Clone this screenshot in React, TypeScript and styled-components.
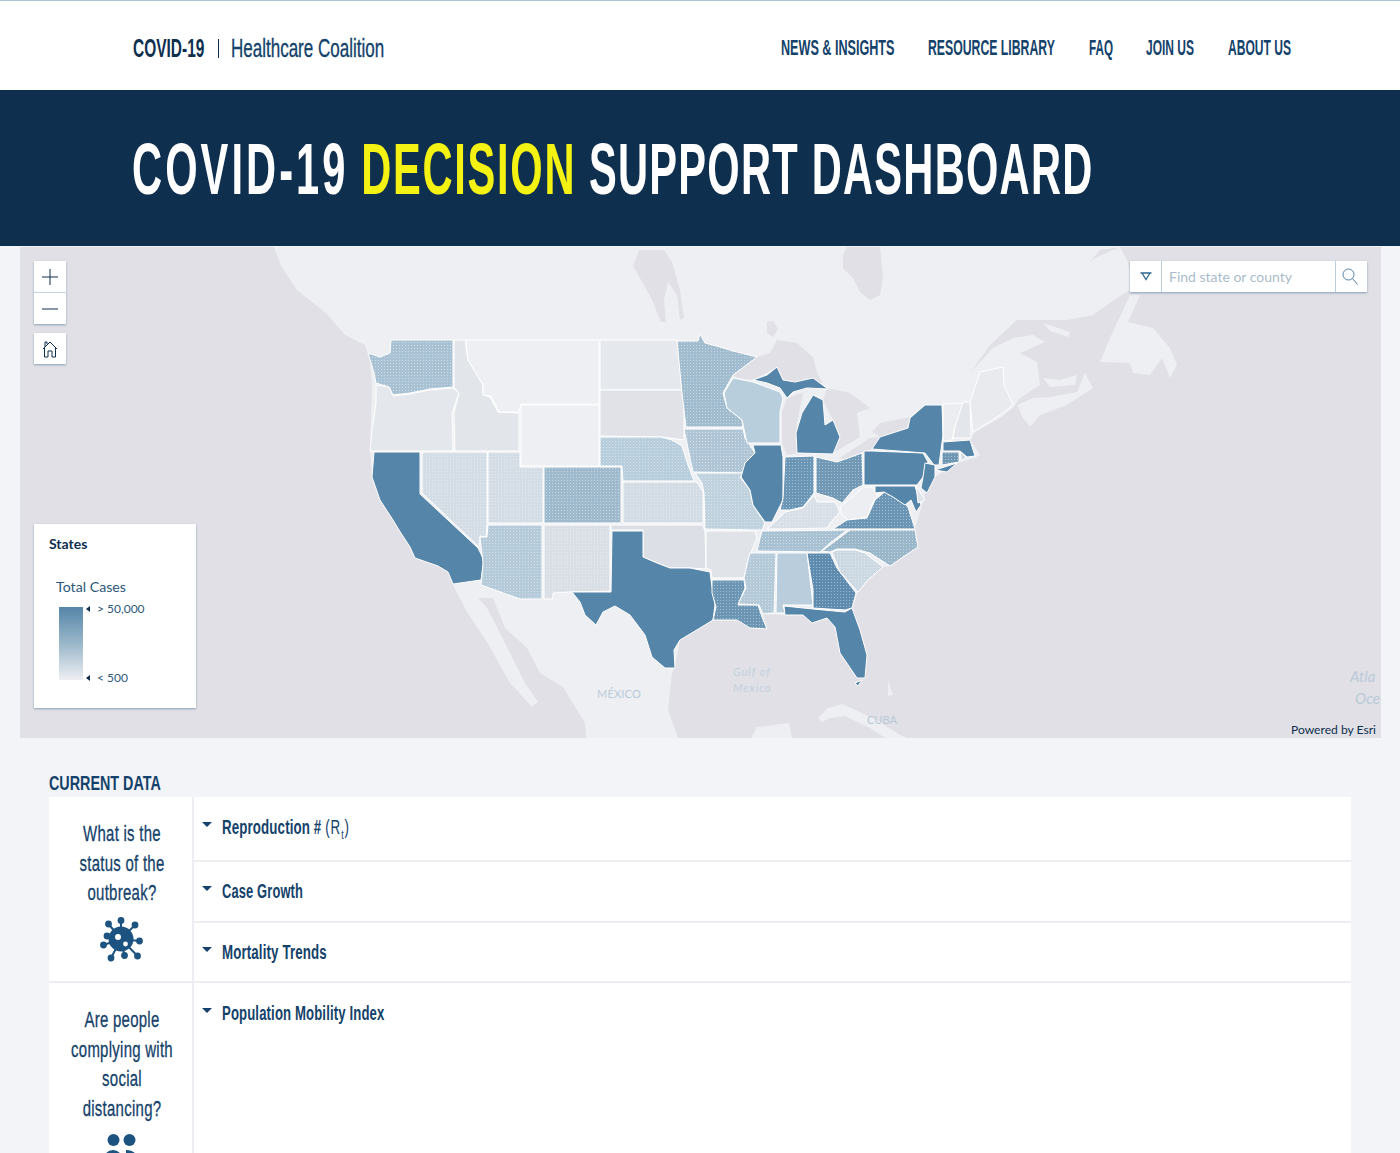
import React from "react";
import styled, { createGlobalStyle } from "styled-components";

const NAVY = "#0f2f4f";
const INK = "#14426a";
const GOTHIC = `"Liberation Sans", Arial, sans-serif`;
const BODY = `Lato, "Open Sans", sans-serif`;

const GlobalStyle = createGlobalStyle`
  html, body {
    margin: 0;
    height: 1153px;
    overflow: hidden;
    background: #f3f4f7;
    font-family: ${BODY};
  }
`;

const Header = styled.header`
  height: 90px;
  box-sizing: border-box;
  border-top: 1px solid #a9c4d8;
  background: #fff;
  display: flex;
  align-items: center;
  justify-content: space-between;
  padding: 5px 109px 0 133px;
`;

const Squeeze = styled.span<{ $sx: number }>`
  display: inline-block;
  white-space: nowrap;
  transform: scaleX(${({ $sx }) => $sx});
  transform-origin: left center;
`;

const Logo = styled.div`
  display: flex;
  align-items: center;
  font-family: ${GOTHIC};
  font-size: 26px;
  line-height: 30px;
`;

const LogoMark = styled.b`
  display: block;
  width: 85px;
  color: ${NAVY};
`;

const LogoBar = styled.i`
  display: block;
  width: 1px;
  height: 19px;
  margin-right: 12px;
  background: ${NAVY};
`;

const LogoName = styled.span`
  display: block;
  width: 153px;
  color: ${INK};
  -webkit-text-stroke: 0.35px ${INK};
`;

const Nav = styled.nav`
  display: flex;
  gap: 33px;
`;

const NavLink = styled.a<{ $w: number }>`
  display: block;
  width: ${({ $w }) => $w}px;
  font-family: ${GOTHIC};
  font-size: 22px;
  font-weight: 700;
  color: ${INK};
`;

const Banner = styled.div`
  height: 156px;
  background: ${NAVY};
  display: flex;
  align-items: center;
  padding-left: 132px;
  box-sizing: border-box;
  overflow: hidden;
`;

const Title = styled.h1`
  margin: 0;
  font-family: ${GOTHIC};
  font-size: 73px;
  font-weight: 700;
  letter-spacing: 2.2px;
  line-height: 1;
  color: #fff;
  em {
    font-style: normal;
    letter-spacing: 3px;
    color: #f4f213;
  }
`;

const TitleLead = styled.span`
  letter-spacing: 5.4px;
`;

const MapFrame = styled.section`
  position: relative;
  margin: 1px 19px 0 20px;
  height: 491px;
  background: #e0e0e6;
  overflow: hidden;
`;

const MapSvg = styled.svg`
  display: block;
  width: 100%;
  height: 100%;
`;

const ToolStack = styled.div`
  position: absolute;
  left: 14px;
  top: 14px;
  display: flex;
  flex-direction: column;
  gap: 9px;
`;

const ToolGroup = styled.div`
  width: 32px;
  background: #fff;
  box-shadow: 0 1px 2px rgba(70, 110, 145, 0.55);
`;

const ToolButton = styled.div`
  height: 31px;
  display: flex;
  align-items: center;
  justify-content: center;
  & + & {
    border-top: 1px solid #c3d3e0;
  }
`;

const SearchBox = styled.div`
  position: absolute;
  right: 14px;
  top: 14px;
  width: 237px;
  height: 31px;
  display: flex;
  background: #fff;
  box-shadow: 0 1px 2px rgba(70, 110, 145, 0.55);
`;

const SearchCaret = styled.div`
  width: 31px;
  display: flex;
  align-items: center;
  justify-content: center;
`;

const SearchField = styled.div`
  flex: 1;
  border-left: 1px solid #b9cddc;
  border-right: 1px solid #b9cddc;
  padding-left: 7px;
  line-height: 31px;
  font-size: 14px;
  color: #aabccb;
`;

const SearchButton = styled.div`
  width: 31px;
  box-sizing: border-box;
  padding-right: 3px;
  display: flex;
  align-items: center;
  justify-content: center;
`;

const Legend = styled.aside`
  position: absolute;
  left: 14px;
  top: 277px;
  width: 162px;
  height: 184px;
  box-sizing: border-box;
  padding: 12px 15px;
  background: #fff;
  box-shadow: 0 1px 2px rgba(70, 110, 145, 0.55);
  color: ${NAVY};
`;

const LegendTitle = styled.div`
  font-size: 14px;
  font-weight: 700;
  line-height: 16px;
`;

const LegendField = styled.div`
  margin: 26px 0 0 7px;
  font-size: 14.2px;
  line-height: 17px;
  color: #2c5878;
`;

const LegendScale = styled.div`
  display: flex;
  margin: 12px 0 0 10px;
  height: 73px;
`;

const LegendRamp = styled.div`
  width: 24px;
  background: linear-gradient(#5585a8, #9ab7ca 50%, #eeeff3);
`;

const LegendStops = styled.div`
  display: flex;
  flex-direction: column;
  justify-content: space-between;
  margin: -4px 0 -4px 3px;
  font-size: 12px;
  line-height: 12px;
  color: #2c5878;
`;

const LegendStop = styled.div`
  display: flex;
  align-items: center;
  gap: 7px;
  &::before {
    content: "";
    border: 3px solid transparent;
    border-left-width: 0;
    border-right: 4px solid ${NAVY};
  }
`;

const Attribution = styled.div`
  position: absolute;
  right: 5px;
  bottom: 1px;
  font-size: 12.1px;
  line-height: 15px;
  color: ${NAVY};
`;

const DataSection = styled.section`
  margin: 0 49px;
`;

const SectionTitle = styled.h2`
  margin: 0;
  height: 59px;
  box-sizing: border-box;
  padding-top: 32px;
  font-family: ${GOTHIC};
  font-size: 21px;
  line-height: 26px;
  font-weight: 700;
  color: ${INK};
`;

const Group = styled.div`
  display: grid;
  grid-template-columns: 145px 1fr;
  background: #fff;
  border-bottom: 2px solid #eceef3;
`;

const Question = styled.div`
  border-right: 2px solid #eceef3;
  padding: 22px 0 0;
  display: flex;
  flex-direction: column;
  align-items: center;
  overflow: hidden;
`;

const QuestionText = styled.div`
  width: 200px;
  flex: none;
  text-align: center;
  font-family: ${GOTHIC};
  font-size: 22px;
  letter-spacing: 0.4px;
  line-height: 29.6px;
  color: ${INK};
  -webkit-text-stroke: 0.3px ${INK};
  transform: translateX(1px) scaleX(0.68);
`;

const IconSlot = styled.div<{ $top: number }>`
  margin-top: ${({ $top }) => $top}px;
  line-height: 0;
`;

const Rows = styled.div`
  display: flex;
  flex-direction: column;
`;

const Row = styled.div<{ $h: number }>`
  height: ${({ $h }) => $h}px;
  box-sizing: border-box;
  padding: 17px 0 0 8px;
  display: flex;
  align-items: flex-start;
  gap: 10px;
  &:first-child {
    padding-top: 18px;
  }
  & + & {
    border-top: 2px solid #eceef3;
  }
`;

const Caret = styled.span`
  flex: none;
  margin-top: 7px;
  border: 5px solid transparent;
  border-top-color: ${INK};
  border-bottom-width: 0;
`;

const RowTitle = styled.div`
  font-family: ${GOTHIC};
  font-size: 20px;
  line-height: 24px;
  font-weight: 700;
  letter-spacing: 0.2px;
  color: ${INK};
  sub {
    font-size: 13px;
    line-height: 0;
  }
`;

const Paren = styled.span`
  font-weight: 400;
  letter-spacing: 1.4px;
`;

const BLUE = "#5585a8";

const NAV_ITEMS = [
  { label: "NEWS & INSIGHTS", width: 114, sx: 0.573 },
  { label: "RESOURCE LIBRARY", width: 128, sx: 0.557 },
  { label: "FAQ", width: 24, sx: 0.53 },
  { label: "JOIN US", width: 49, sx: 0.545 },
  { label: "ABOUT US", width: 63, sx: 0.548 },
];

const LAND = [
  "274,247 281,266 297,290 326,313 345,335 365,345 370,360 372,385 370,450 372,477 380,500 393,520 399,530 410,547 415,558 438,566 448,572 453,585 467,612 487,642 510,683 532,707 538,702 525,683 517,667 500,633 487,608 478,598 493,598 505,628 527,648 540,673 563,687 585,723 586,738 678,738 668,710 672,673 675,667 680,640 700,628 713,620 737,620 767,629 763,614 785,615 803,615 812,623 827,618 835,627 840,653 857,678 865,678 867,655 860,630 852,608 858,592 868,580 883,567 890,566 903,557 918,547 915,529 922,505 925,493 935,477 957,463 975,458 980,455 970,440 975,432 1000,418 1013,408 1020,398 1040,385 1037,362 1020,353 1045,342 1033,335 1013,338 993,348 970,373 990,345 1017,320 1067,320 1093,315 1117,298 1133,288 1128,262 1120,247",
  "1017,405 1033,398 1050,397 1077,392 1085,373 1093,388 1067,405 1040,415 1030,427 1023,418",
  "1043,378 1060,380 1077,375 1075,385 1050,387",
  "1043,323 1070,332 1068,337 1050,331",
  "1100,362 1110,338 1130,295 1140,295 1128,322 1153,328 1170,348 1177,365 1170,378 1162,358 1150,375 1133,373 1130,363",
  "818,718 828,708 842,704 860,712 880,722 900,735 908,738 885,738 870,728 845,716 830,718 822,722",
  "751,738 757,727 789,723 792,738",
  "888,680 893,695 888,696",
];

const LAKES = [
  "843,255 847,247 880,247 883,278 880,295 870,300 860,292 853,278 843,268",
  "633,266 639,250 664,250 672,262 680,290 684,318 680,320 677,295 668,282 664,300 666,322 661,322 652,300 644,285",
  "733,375 757,357 770,353 777,340 797,343 813,357 817,373 823,383 807,380 795,382 783,380 777,367 753,380 737,378",
  "782,412 787,398 810,390 803,393 797,423 798,453 787,455 782,443",
  "827,388 850,393 870,408 857,413 860,437 843,447 833,453 840,437 833,420 823,400",
  "840,458 870,438 882,437 870,450 862,453 843,460",
  "872,432 880,423 910,417 908,428 880,437",
  "767,322 773,321 778,329 773,337 767,333",
  "1090,262 1100,250 1120,247 1095,258",
];

// dotted marks the states that are stippled in the source map
const STATES: { fill: string; points: string; dotted?: boolean }[] = [
  { fill: "#a9c2d3", dotted: true, points: "391,340 453,340 453,387 430,389 410,393 393,395 389,387 376,383 374,373 368,353 380,357 390,353" },
  { fill: "#e4e7ec", points: "376,385 389,387 393,396 410,394 430,390 453,388 459,393 452,413 453,451 370,451 372,430 376,403" },
  { fill: "#e2e5ea", points: "454,340 465,340 468,360 483,385 483,395 490,397 498,412 519,413 519,451 455,451 454,413 459,393 454,387" },
  { fill: "#edeff3", points: "466,340 599,340 599,404 521,404 519,412 499,412 491,396 483,395 483,385 468,360" },
  { fill: "#e5e8ec", points: "600,340 677,340 682,390 600,390" },
  { fill: "#e0e2e8", points: "600,390 682,390 684,405 684,440 662,437 600,436" },
  { fill: "#b9cedc", dotted: true, points: "600,437 661,437 672,440 682,446 688,465 694,481 623,481 622,466 600,466" },
  { fill: "#eeeff3", points: "521,405 599,405 599,466 521,466" },
  { fill: "#9fbacc", dotted: true, points: "544,467 621,467 621,523 544,523" },
  { fill: "#d4dce5", dotted: true, points: "488,452 520,452 520,467 543,467 543,523 488,523" },
  { fill: "#d4dce5", dotted: true, points: "422,452 487,452 487,523 486,537 480,536 479,547 422,493" },
  { fill: BLUE, points: "374,452 420,452 420,494 478,548 484,560 481,580 453,584 448,572 438,566 415,558 410,547 399,530 393,520 380,500 372,477" },
  { fill: "#b5cbda", dotted: true, points: "488,525 542,525 542,599 520,599 481,585 483,563 480,537 487,537" },
  { fill: "#dadfe6", dotted: true, points: "544,525 610,525 610,591 570,592 553,593 553,599 544,599" },
  { fill: "#d3dbe4", dotted: true, points: "623,482 697,482 703,492 703,523 623,523" },
  { fill: "#dddfe6", points: "611,525 703,525 705,532 706,569 690,568 670,568 655,562 643,557 643,530 611,530" },
  { fill: BLUE, points: "612,531 643,531 643,557 657,563 670,568 690,568 710,572 711,580 715,605 713,620 700,628 680,640 674,650 675,668 665,668 652,657 645,635 630,615 615,606 603,612 596,625 585,615 580,602 572,592 611,592" },
  { fill: "#a2bccf", dotted: true, points: "677,341 698,341 700,334 705,343 720,347 733,351 757,357 733,375 723,393 727,408 742,420 743,427 686,427 682,393" },
  { fill: "#b0c6d6", dotted: true, points: "684,429 743,429 745,438 755,453 745,463 744,473 693,472 690,458" },
  { fill: "#c1d2df", dotted: true, points: "695,473 744,473 740,477 750,490 753,505 765,523 762,530 756,530 705,529 704,493 702,483" },
  { fill: "#e0e3e8", points: "706,531 755,531 757,538 748,560 744,578 712,578 711,570 706,568" },
  { fill: "#6c96b3", dotted: true, points: "712,580 744,580 745,588 738,605 758,605 762,617 767,629 750,628 737,620 713,620 716,607 712,593" },
  { fill: "#b5cad9", dotted: true, points: "750,553 776,553 774,613 763,614 759,605 738,604 746,588 744,578 748,560" },
  { fill: "#b9cddd", points: "777,553 807,553 813,605 783,605 785,613 776,613" },
  { fill: "#5f8cae", dotted: true, points: "807,553 830,553 837,568 856,593 852,608 845,610 813,608 813,590" },
  { fill: BLUE, points: "784,606 813,609 845,612 852,608 860,630 867,655 865,678 857,678 840,653 835,627 827,618 812,623 803,615 785,615" },
  { fill: "#ccd8e2", dotted: true, points: "832,552 837,550 855,550 865,553 883,567 868,580 858,592 840,572" },
  { fill: "#9ab7ca", dotted: true, points: "822,551 850,530 915,530 918,547 903,557 890,566 870,553 855,549 837,549 830,552" },
  { fill: "#a9c2d3", dotted: true, points: "762,531 847,530 830,543 820,552 757,551 760,538" },
  { fill: "#d8dfe7", dotted: true, points: "767,529 777,520 785,512 803,508 814,495 817,502 835,502 840,512 830,523 827,528 780,529" },
  { fill: BLUE, points: "753,445 781,445 783,457 783,500 777,512 772,522 765,522 753,505 750,490 741,477 745,463 755,453" },
  { fill: "#6b96b5", dotted: true, points: "785,457 814,456 814,493 803,507 790,510 780,510 783,498" },
  { fill: "#7199b5", dotted: true, points: "816,457 837,462 862,453 863,485 853,490 842,503 833,498 816,493" },
  { fill: BLUE, points: "797,453 796,433 802,413 813,395 823,400 825,425 833,420 840,437 833,454" },
  { fill: BLUE, points: "753,380 767,375 777,367 783,380 795,382 813,378 828,389 807,388 793,392 787,398 780,388 767,383" },
  { fill: "#b9cedd", points: "733,378 753,382 780,392 783,398 780,412 780,443 747,443 742,420 727,408 724,393" },
  { fill: BLUE, points: "864,451 872,451 923,453 928,462 923,477 917,485 864,485" },
  { fill: BLUE, points: "872,449 880,437 908,428 910,418 925,405 942,405 943,435 939,465 934,465 925,453" },
  { fill: BLUE, points: "935,470 957,463 947,472" },
  { fill: BLUE, points: "925,463 935,465 935,477 927,493 921,488 923,477" },
  { fill: "#ecedf1", points: "943,404 963,403 955,427 952,440 943,441" },
  { fill: "#e3e6eb", points: "963,402 970,402 971,438 953,438 955,427" },
  { fill: "#e8eaee", points: "980,372 1003,367 1004,385 1013,405 1000,415 973,432 970,402" },
  { fill: BLUE, points: "943,442 970,440 975,456 967,457 960,451 943,451" },
  { fill: "#6d97b3", dotted: true, points: "942,452 959,452 959,462 942,465" },
  { fill: "#c7d6e2", points: "960,452 966,457 962,461" },
  { fill: "#eceef2", points: "840,507 857,493 863,487 873,487 877,495 887,488 874,500 867,517 848,520 842,515" },
  { fill: "#6a95b5", dotted: true, points: "833,529 847,520 867,518 875,500 887,490 900,498 908,507 915,529" },
  { fill: BLUE, points: "875,486 915,486 921,505 916,512 911,500 905,505 893,497 884,492 875,493" },
  { fill: "#dfe3e9", points: "916,486 925,500 918,503" },
  { fill: BLUE, points: "855,683 862,680 858,686" },
];

const USMap = () => (
  <MapSvg viewBox="20 247 1361 491" aria-label="Map of total cases by state">
    <defs>
      <pattern id="stipple" width="3" height="3" patternUnits="userSpaceOnUse">
        <rect width="1" height="1" fill="#fff" fillOpacity="0.4" />
      </pattern>
    </defs>
    {LAND.map((points) => (
      <polygon key={points} points={points} fill="#eeeff3" />
    ))}
    {LAKES.map((points) => (
      <polygon key={points} points={points} fill="#e0e0e6" />
    ))}
    {STATES.map((s) => (
      <g key={s.points}>
        <polygon points={s.points} fill={s.fill} stroke="#fff" strokeWidth="1" strokeLinejoin="round" />
        {s.dotted && <polygon points={s.points} fill="url(#stipple)" />}
      </g>
    ))}
    <g fontFamily="Lato, sans-serif" fill="#b9cad8">
      <text x="597" y="698" fontSize="11" letterSpacing="0.2">MÉXICO</text>
      <text x="867" y="724" fontSize="11">CUBA</text>
      <g fontSize="11" fontStyle="italic" letterSpacing="1" fill="#c4d1dd">
        <text x="733" y="676">Gulf of</text>
        <text x="733" y="692">Mexico</text>
      </g>
      <g fontSize="15" fontStyle="italic">
        <text x="1350" y="682">Atla</text>
        <text x="1355" y="704">Oce</text>
      </g>
    </g>
  </MapSvg>
);

const PlusIcon = () => (
  <svg width="16" height="16" viewBox="0 0 16 16" fill="none" stroke={NAVY}>
    <path d="M0 8h16M8 0v16" />
  </svg>
);

const MinusIcon = () => (
  <svg width="16" height="16" viewBox="0 0 16 16" fill="none" stroke={NAVY}>
    <path d="M0 8h16" />
  </svg>
);

const HomeIcon = () => (
  <svg width="16" height="18" viewBox="0 0 16 18" fill="none" stroke={NAVY}>
    <path d="M1 9l7-7 7 7M3 7V2h2v2M2.5 8v9H6v-6h4v6h3.5V8" />
  </svg>
);

const DropIcon = () => (
  <svg width="12" height="9" viewBox="0 0 12 9" fill="none" stroke="#2f6690" strokeWidth="1.3">
    <path d="M0.5 1h11M2 1l4 6.5L10 1" />
  </svg>
);

const SearchIcon = () => (
  <svg width="16" height="17" viewBox="0 0 16 17" fill="none" stroke="#4f7fa3">
    <circle cx="6.5" cy="6.5" r="5.5" />
    <path d="M10.5 10.5l5 6" />
  </svg>
);

const VIRUS_BALLS = [
  [0, -18.5],
  [14, -14],
  [18.5, 2],
  [16.5, 17],
  [3.5, 16.5],
  [-10, 19],
  [-17.5, 6],
  [-14, -3],
  [-12.5, -15],
];

const VirusIcon = () => (
  <svg width="46" height="46" viewBox="-23 -23 46 46" fill="#1d5380">
    <circle r="12.5" />
    {VIRUS_BALLS.map(([x, y]) => (
      <g key={`${x}${y}`}>
        <line x2={x} y2={y} stroke="#1d5380" strokeWidth="2" />
        <circle cx={x} cy={y} r="3.4" />
      </g>
    ))}
    <circle cx="-3" cy="-2" r="3" fill="#fff" />
    <circle cx="4.5" cy="5" r="2.4" fill="#fff" />
  </svg>
);

const PeopleIcon = () => (
  <svg width="40" height="40" viewBox="0 0 40 40" fill="#1d5380">
    <circle cx="12.5" cy="6" r="6" />
    <circle cx="28.5" cy="6" r="6" />
    <ellipse cx="12" cy="27" rx="10" ry="11" />
    <path d="M25 16c8 0 13 5 13 14H25z" />
  </svg>
);

export default function App() {
  return (
    <>
      <GlobalStyle />
      <Header>
        <Logo>
          <LogoMark><Squeeze $sx={0.595}>COVID-19</Squeeze></LogoMark>
          <LogoBar />
          <LogoName><Squeeze $sx={0.654}>Healthcare Coalition</Squeeze></LogoName>
        </Logo>
        <Nav>
          {NAV_ITEMS.map((item) => (
            <NavLink key={item.label} $w={item.width}>
              <Squeeze $sx={item.sx}>{item.label}</Squeeze>
            </NavLink>
          ))}
        </Nav>
      </Header>
      <Banner>
        <Title>
          <Squeeze $sx={0.57}>
            <TitleLead>COVID-19</TitleLead> <em>DECISION</em> SUPPORT DASHBOARD
          </Squeeze>
        </Title>
      </Banner>
      <MapFrame>
        <USMap />
        <ToolStack>
          <ToolGroup>
            <ToolButton><PlusIcon /></ToolButton>
            <ToolButton><MinusIcon /></ToolButton>
          </ToolGroup>
          <ToolGroup>
            <ToolButton><HomeIcon /></ToolButton>
          </ToolGroup>
        </ToolStack>
        <SearchBox>
          <SearchCaret><DropIcon /></SearchCaret>
          <SearchField>Find state or county</SearchField>
          <SearchButton><SearchIcon /></SearchButton>
        </SearchBox>
        <Legend>
          <LegendTitle>States</LegendTitle>
          <LegendField>Total Cases</LegendField>
          <LegendScale>
            <LegendRamp />
            <LegendStops>
              <LegendStop>&gt; 50,000</LegendStop>
              <LegendStop>&lt; 500</LegendStop>
            </LegendStops>
          </LegendScale>
        </Legend>
        <Attribution>Powered by Esri</Attribution>
      </MapFrame>
      <DataSection>
        <SectionTitle><Squeeze $sx={0.683}>CURRENT DATA</Squeeze></SectionTitle>
        <Group>
          <Question>
            <QuestionText>What is the<br />status of the<br />outbreak?</QuestionText>
            <IconSlot $top={8}><VirusIcon /></IconSlot>
          </Question>
          <Rows>
            <Row $h={63}><Caret /><RowTitle><Squeeze $sx={0.665}>Reproduction # <Paren>(R<sub>t</sub>)</Paren></Squeeze></RowTitle></Row>
            <Row $h={61}><Caret /><RowTitle><Squeeze $sx={0.645}>Case Growth</Squeeze></RowTitle></Row>
            <Row $h={60}><Caret /><RowTitle><Squeeze $sx={0.665}>Mortality Trends</Squeeze></RowTitle></Row>
          </Rows>
        </Group>
        <Group>
          <Question>
            <QuestionText>Are people<br />complying with<br />social<br />distancing?</QuestionText>
            <IconSlot $top={11}><PeopleIcon /></IconSlot>
          </Question>
          <Rows>
            <Row $h={200}><Caret /><RowTitle><Squeeze $sx={0.657}>Population Mobility Index</Squeeze></RowTitle></Row>
          </Rows>
        </Group>
      </DataSection>
    </>
  );
}
